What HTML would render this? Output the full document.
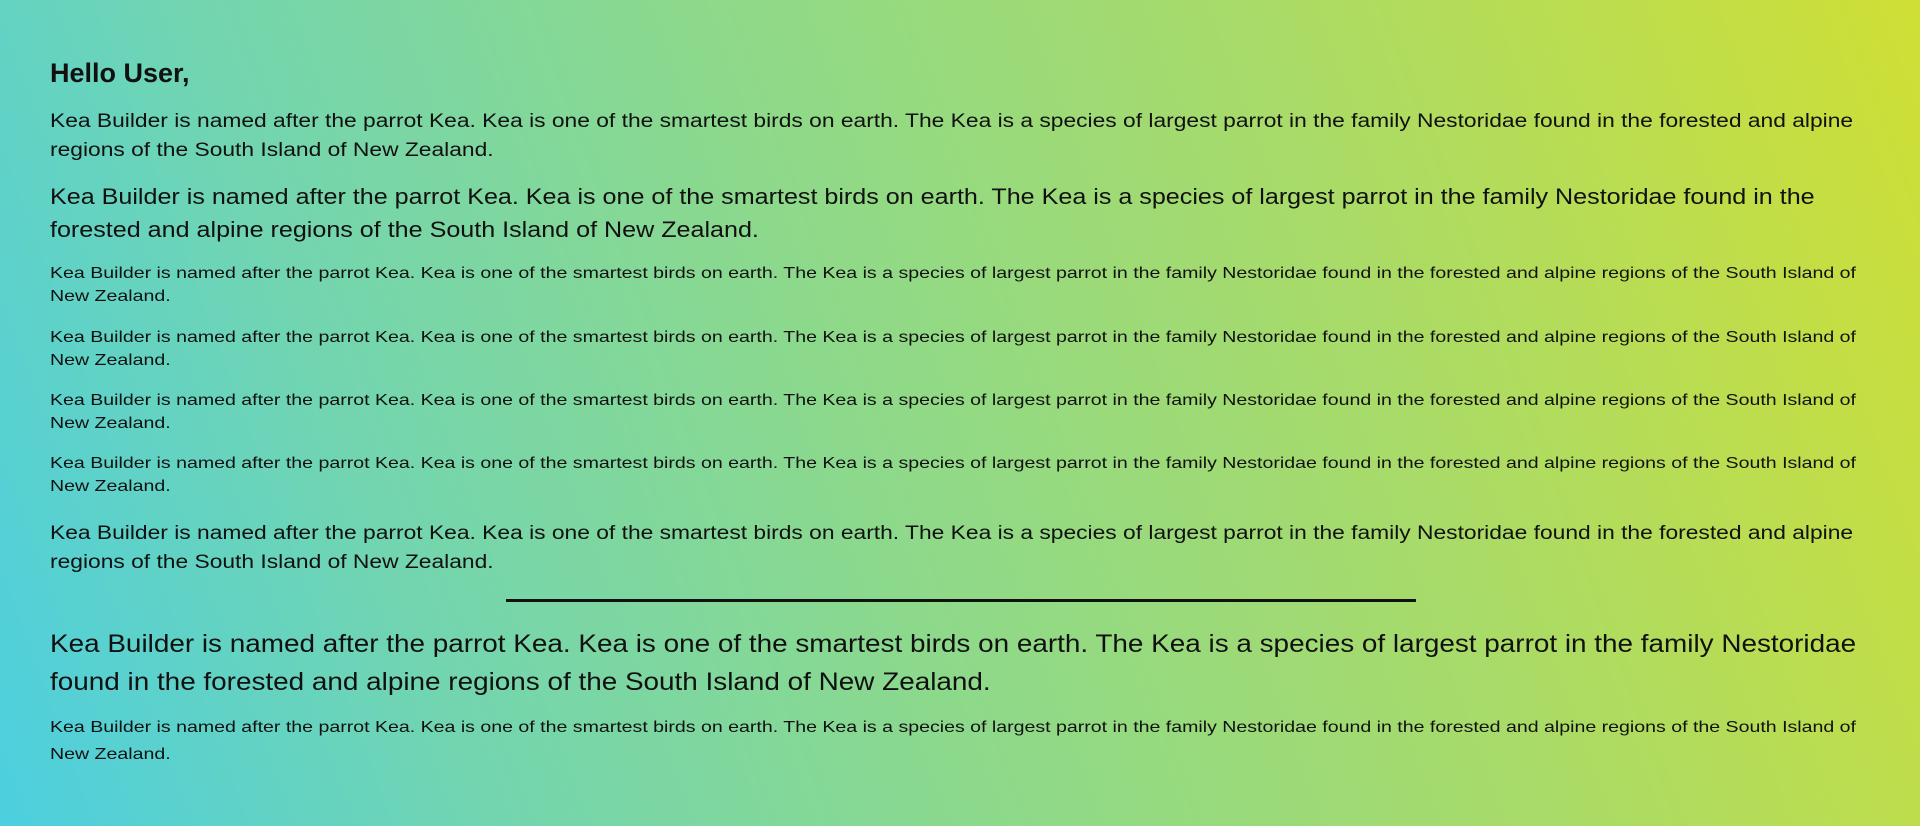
<!DOCTYPE html>
<html><head><meta charset="utf-8"><style>
html,body{margin:0;padding:0}
body{width:1920px;height:828px;overflow:hidden;background:#fff;font-family:"Liberation Sans",sans-serif;color:#111}
.bg{position:absolute;left:0;top:0;width:1920px;height:826px;background:linear-gradient(70deg,#4ccfe0 0%,#72d5b0 22%,#8dd98b 45%,#a9db68 70%,#cfdf35 100%)}
.b{position:absolute;left:50px;white-space:nowrap;transform-origin:0 0}
.hr{position:absolute;left:506px;width:910px;top:599px;height:3px;background:#111}
.s{font-size:16px;line-height:23px;transform:scaleX(1.222)}
.m{font-size:19px;line-height:29px;transform:scaleX(1.2)}
</style></head><body>
<div class="bg"></div>
<div class="b" style="top:56px;font-size:27px;line-height:34px;font-weight:bold">Hello User,</div>
<div class="b m" style="top:107px">Kea Builder is named after the parrot Kea. Kea is one of the smartest birds on earth. The Kea is a species of largest parrot in the family Nestoridae found in the forested and alpine<br>regions of the South Island of New Zealand.</div>
<div class="b" style="top:180px;font-size:22px;line-height:33px;transform:scaleX(1.141)">Kea Builder is named after the parrot Kea. Kea is one of the smartest birds on earth. The Kea is a species of largest parrot in the family Nestoridae found in the<br>forested and alpine regions of the South Island of New Zealand.</div>
<div class="b s" style="top:262px">Kea Builder is named after the parrot Kea. Kea is one of the smartest birds on earth. The Kea is a species of largest parrot in the family Nestoridae found in the forested and alpine regions of the South Island of<br>New Zealand.</div>
<div class="b s" style="top:326px">Kea Builder is named after the parrot Kea. Kea is one of the smartest birds on earth. The Kea is a species of largest parrot in the family Nestoridae found in the forested and alpine regions of the South Island of<br>New Zealand.</div>
<div class="b s" style="top:389px">Kea Builder is named after the parrot Kea. Kea is one of the smartest birds on earth. The Kea is a species of largest parrot in the family Nestoridae found in the forested and alpine regions of the South Island of<br>New Zealand.</div>
<div class="b s" style="top:452px">Kea Builder is named after the parrot Kea. Kea is one of the smartest birds on earth. The Kea is a species of largest parrot in the family Nestoridae found in the forested and alpine regions of the South Island of<br>New Zealand.</div>
<div class="b m" style="top:519px">Kea Builder is named after the parrot Kea. Kea is one of the smartest birds on earth. The Kea is a species of largest parrot in the family Nestoridae found in the forested and alpine<br>regions of the South Island of New Zealand.</div>
<div class="hr"></div>
<div class="b" style="top:625px;font-size:25px;line-height:38px;transform:scaleX(1.115)">Kea Builder is named after the parrot Kea. Kea is one of the smartest birds on earth. The Kea is a species of largest parrot in the family Nestoridae<br>found in the forested and alpine regions of the South Island of New Zealand.</div>
<div class="b s" style="top:714px;line-height:27px">Kea Builder is named after the parrot Kea. Kea is one of the smartest birds on earth. The Kea is a species of largest parrot in the family Nestoridae found in the forested and alpine regions of the South Island of<br>New Zealand.</div>
</body></html>
